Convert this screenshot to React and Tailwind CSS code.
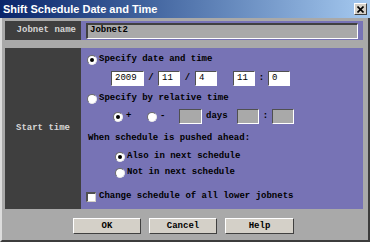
const mono = { fontFamily: '"Liberation Mono", "Courier New", monospace' };

function Radio({ checked }) {
  return (
    <span className="relative inline-block h-[10px] w-[10px] shrink-0 rounded-full border border-t-[#6a6a6a] border-l-[#6a6a6a] border-r-[#e8e8e8] border-b-[#e8e8e8] bg-white">
      {checked && <span className="absolute left-[2px] top-[2px] h-[4px] w-[4px] rounded-full bg-black" />}
    </span>
  );
}

function Field({ w, value, disabled }) {
  return (
    <div
      className={`${w} flex h-[15px] shrink-0 items-center border border-t-[#505050] border-l-[#505050] border-r-white border-b-white pl-[3px] text-[9px] font-normal leading-none text-black ${
        disabled ? 'bg-[#a9a9a9]' : 'bg-white'
      }`}
    >
      {value}
    </div>
  );
}

function Sep({ w, ch }) {
  return <span className={`${w} shrink-0 text-center`}>{ch}</span>;
}

function Btn({ children, w }) {
  return (
    <button
      type="button"
      className={`${w} h-[16px] border border-t-white border-l-white border-r-[#404040] border-b-[#404040] bg-[#d4d0c8] text-[9px] font-bold leading-none text-black`}
      style={mono}
    >
      {children}
    </button>
  );
}

export default function App() {
  return (
    <div className="flex h-[242px] w-[370px] flex-col overflow-hidden bg-[#a9a9a9]">
      {/* title bar */}
      <div className="flex h-[18px] shrink-0 items-center justify-between bg-gradient-to-r from-[#0a246a] to-[#a6caf0] pl-[3px] pr-[3px]">
        <span
          className="text-[11px] font-bold leading-none text-white"
          style={{ fontFamily: '"Liberation Sans", Arial, sans-serif' }}
        >
          Shift Schedule Date and Time
        </span>
        <span className="flex h-[12px] w-[13px] items-center justify-center border border-t-white border-l-white border-r-[#404040] border-b-[#404040] bg-[#d4d0c8]">
          <svg width="7" height="7" viewBox="0 0 7 7">
            <path d="M0.5 0.5 L6.5 6.5 M6.5 0.5 L0.5 6.5" stroke="black" strokeWidth="1.6" />
          </svg>
        </span>
      </div>

      <div
        className="flex flex-1 flex-col border-l-2 border-r-2 border-b-2 border-l-[#dcdcdc] border-r-[#3c3c3c] border-b-[#3c3c3c] pl-[3px] pr-[5px] text-[9px] font-bold text-black"
        style={mono}
      >
        {/* jobnet name */}
        <div className="mt-[3px] flex h-[19px]">
          <div className="flex w-[76px] shrink-0 items-center justify-end bg-[#3f3f3f] pr-[5px] text-[#d6d6d6]">
            Jobnet name
          </div>
          <div className="flex flex-1 items-center bg-[#7773b5] px-[5px]">
            <div className="flex h-[16px] flex-1 items-center border-2 border-t-[#404040] border-l-[#404040] border-r-white border-b-white border-r-[1px] border-b-[1px] bg-[#a9a9a9] pl-[2px]">
              Jobnet2
            </div>
          </div>
        </div>

        {/* start time */}
        <div className="mt-[8px] flex h-[161px]">
          <div className="flex w-[76px] shrink-0 items-center justify-center bg-[#3f3f3f] text-[#d6d6d6]">
            Start time
          </div>
          <div className="flex flex-1 flex-col bg-[#7773b5]">
            <div className="mt-[6px] flex h-[12px] items-center gap-[2px] pl-[6px]">
              <Radio checked />
              <span>Specify date and time</span>
            </div>
            <div className="mt-[5px] flex items-center pl-[30px]">
              <Field w="w-[33px]" value="2009" />
              <Sep w="w-[14px]" ch="/" />
              <Field w="w-[22px]" value="11" />
              <Sep w="w-[15px]" ch="/" />
              <Field w="w-[22px]" value="4" />
              <span className="w-[16px] shrink-0" />
              <Field w="w-[22px]" value="11" />
              <Sep w="w-[13px]" ch=":" />
              <Field w="w-[22px]" value="0" />
            </div>
            <div className="mt-[7px] flex h-[12px] items-center gap-[2px] pl-[6px]">
              <Radio />
              <span>Specify by relative time</span>
            </div>
            <div className="mt-[4px] flex items-center pl-[32px]">
              <Radio checked />
              <span className="ml-[3px] w-[21px] shrink-0">+</span>
              <Radio />
              <span className="ml-[3px] w-[19px] shrink-0">-</span>
              <Field w="w-[23px]" value="" disabled />
              <span className="w-[35px] shrink-0 pl-[4px]">days</span>
              <Field w="w-[22px]" value="" disabled />
              <Sep w="w-[13px]" ch=":" />
              <Field w="w-[22px]" value="" disabled />
            </div>
            <div className="mt-[9px] flex h-[12px] items-center pl-[7px]">
              When schedule is pushed ahead:
            </div>
            <div className="mt-[6px] flex h-[12px] items-center gap-[2px] pl-[34px]">
              <Radio checked />
              <span>Also in next schedule</span>
            </div>
            <div className="mt-[4px] flex h-[12px] items-center gap-[2px] pl-[34px]">
              <Radio />
              <span>Not in next schedule</span>
            </div>
            <div className="mt-[12px] flex h-[12px] items-center gap-[3px] pl-[5px]">
              <span className="inline-block h-[10px] w-[10px] shrink-0 border-2 border-r-[1px] border-b-[1px] border-t-[#505050] border-l-[#505050] border-r-[#d4d0c8] border-b-[#d4d0c8] bg-white" />
              <span>Change schedule of all lower jobnets</span>
            </div>
          </div>
        </div>

        {/* buttons */}
        <div className="mt-[9px] flex justify-center gap-[8px] pr-[1px]">
          <Btn w="w-[68px]">OK</Btn>
          <Btn w="w-[68px]">Cancel</Btn>
          <Btn w="w-[69px]">Help</Btn>
        </div>
      </div>
    </div>
  );
}
